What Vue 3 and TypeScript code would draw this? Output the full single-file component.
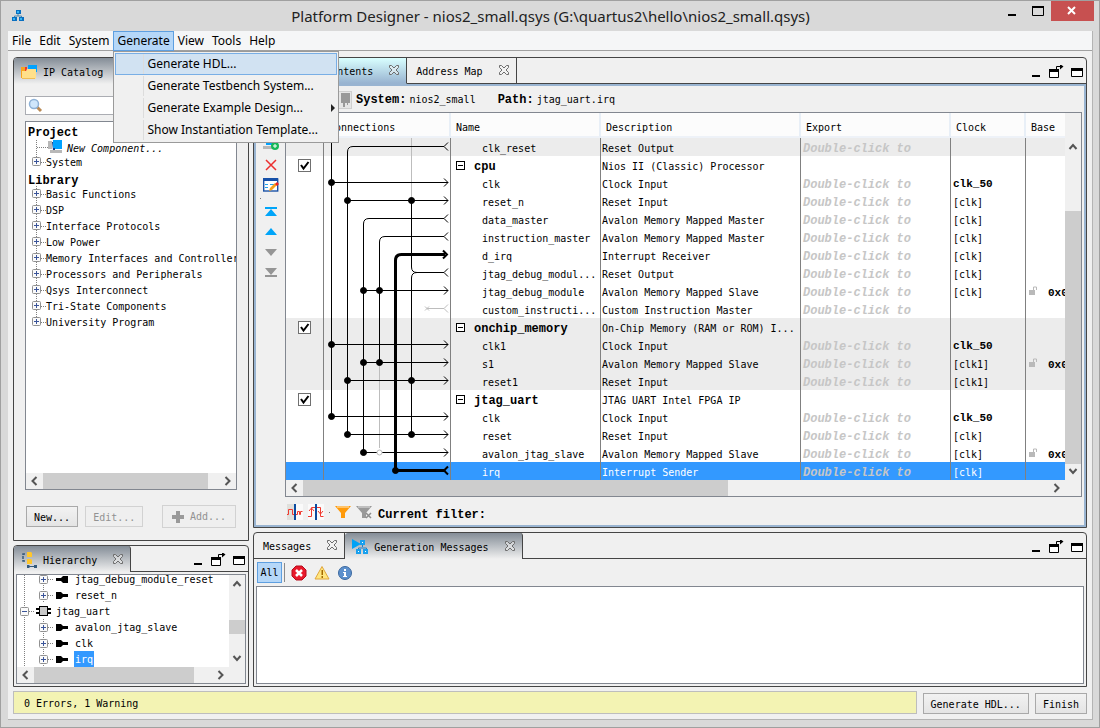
<script setup lang="ts">
interface Row {
  name: string
  desc: string
  kind?: 'module'
  clock?: string
  base?: string
  shade?: boolean
  selected?: boolean
}

const menus: string[] = ['File', 'Edit', 'System', 'Generate', 'View', 'Tools', 'Help']
const generateItems: string[] = [
  'Generate HDL...',
  'Generate Testbench System...',
  'Generate Example Design...',
  'Show Instantiation Template...',
]
const library: string[] = [
  'Basic Functions',
  'DSP',
  'Interface Protocols',
  'Low Power',
  'Memory Interfaces and Controllers',
  'Processors and Peripherals',
  'Qsys Interconnect',
  'Tri-State Components',
  'University Program',
]
const hierarchy: string[] = ['jtag_debug_module_reset', 'reset_n', 'jtag_uart', 'avalon_jtag_slave', 'clk', 'irq']

const rows: Row[] = [
  { name: 'clk_reset', desc: 'Reset Output', shade: true },
  { name: 'cpu', desc: 'Nios II (Classic) Processor', kind: 'module' },
  { name: 'clk', desc: 'Clock Input', clock: 'clk_50' },
  { name: 'reset_n', desc: 'Reset Input', clock: '[clk]' },
  { name: 'data_master', desc: 'Avalon Memory Mapped Master', clock: '[clk]' },
  { name: 'instruction_master', desc: 'Avalon Memory Mapped Master', clock: '[clk]' },
  { name: 'd_irq', desc: 'Interrupt Receiver', clock: '[clk]' },
  { name: 'jtag_debug_modul...', desc: 'Reset Output', clock: '[clk]' },
  { name: 'jtag_debug_module', desc: 'Avalon Memory Mapped Slave', clock: '[clk]', base: '0x0' },
  { name: 'custom_instructi...', desc: 'Custom Instruction Master' },
  { name: 'onchip_memory', desc: 'On-Chip Memory (RAM or ROM) I...', kind: 'module', shade: true },
  { name: 'clk1', desc: 'Clock Input', clock: 'clk_50', shade: true },
  { name: 's1', desc: 'Avalon Memory Mapped Slave', clock: '[clk1]', base: '0x0', shade: true },
  { name: 'reset1', desc: 'Reset Input', clock: '[clk1]', shade: true },
  { name: 'jtag_uart', desc: 'JTAG UART Intel FPGA IP', kind: 'module' },
  { name: 'clk', desc: 'Clock Input', clock: 'clk_50' },
  { name: 'reset', desc: 'Reset Input', clock: '[clk]' },
  { name: 'avalon_jtag_slave', desc: 'Avalon Memory Mapped Slave', clock: '[clk]', base: '0x0' },
  { name: 'irq', desc: 'Interrupt Sender', clock: '[clk]', selected: true },
]

const rowY = (i: number): number => i * 18 + 8.5

/* wires that end in an arrow head: [row, start x] */
const wires: [number, number][] = [
  [2, 7], [3, 23], [8, 39], [11, 7], [12, 39], [13, 23], [15, 7], [16, 23], [17, 39],
]
/* solid junctions: [row, x] */
const dots: [number, number][] = [
  [2, 7], [11, 7], [15, 7],
  [3, 23], [13, 23], [16, 23],
  [8, 39], [12, 39], [17, 39],
  [8, 55], [12, 55],
  [18, 71],
  [3, 87], [13, 87], [16, 87],
]
const forks: number[] = [0, 4, 5, 7]
</script>

<template>
  <svg class="defs" aria-hidden="true">
    <symbol id="i-close" viewBox="0 0 12 12">
      <path d="M1.500 1.500h2l2.500 2.500 2.500-2.500h2v2l-2.500 2.500 2.500 2.500v2h-2l-2.500-2.500-2.500 2.500h-2v-2l2.500-2.500-2.500-2.500z" fill="#f4f4f4" fill-opacity=".5" stroke="#6d6d6d" />
    </symbol>
    <symbol id="i-min" viewBox="0 0 10 14"><path d="M1 10h8v2h-8z" /></symbol>
    <symbol id="i-float" viewBox="0 0 16 14">
      <path d="M1.500 4v8.500h9v-6.500" fill="#fff" stroke="#000" /><path d="M1 4h10v3h-10z" />
      <path d="M8.500 4v-2.500h4" fill="none" stroke="#000" /><path d="M12 -1l3.500 2.500-3.500 3z" />
    </symbol>
    <symbol id="i-max" viewBox="0 0 12 14"><path d="M.5 3.500h11v8h-11z" fill="#fff" stroke="#000" /><path d="M0 3h12v3h-12z" /></symbol>
    <symbol id="i-left" viewBox="0 0 17 16"><path d="M10.500 4l-4 4 4 4" fill="none" stroke="#555" stroke-width="2" /></symbol>
    <symbol id="i-right" viewBox="0 0 17 16"><path d="M6.500 4l4 4-4 4" fill="none" stroke="#555" stroke-width="2" /></symbol>
    <symbol id="i-up" viewBox="0 0 16 17"><path d="M4.500 11l3.500-4 3.500 4" fill="none" stroke="#555" stroke-width="2" /></symbol>
    <symbol id="i-down" viewBox="0 0 16 17"><path d="M4.500 6l3.500 4 3.500-4" fill="none" stroke="#555" stroke-width="2" /></symbol>
    <symbol id="i-plus" viewBox="0 0 9 9">
      <rect x=".5" y=".5" width="8" height="8" rx="1" fill="#fafafa" stroke="#919191" /><path d="M2 4.500h5M4.500 2v5" stroke="#3a5499" />
    </symbol>
    <symbol id="i-minus" viewBox="0 0 9 9">
      <rect x=".5" y=".5" width="8" height="8" rx="1" fill="#fafafa" stroke="#919191" /><path d="M2 4.500h5" stroke="#3a5499" />
    </symbol>
    <symbol id="i-port" viewBox="0 0 12 8"><path d="M0 0h5l2 2h5v3h-5l-2 2h-5z" /></symbol>
    <symbol id="i-port-out" viewBox="0 0 12 8"><path d="M12 0h-5l-2 2h-5v3h5l2 2h5z" /></symbol>
  </svg>

  <div class="window">
    <header class="titlebar">
      <svg class="app-icon" width="12" height="12" viewBox="0 0 12 12">
        <path d="M6 4v2M2.500 8v-2h7v2" fill="none" stroke="#4b87ae" />
        <path d="M4 0h5v4h-5zM0 7h5v4h-5zM7 7h5v4h-5z" fill="#0a6fc0" /><path d="M5 1h2v2h-2zM1 8h2v2h-2zM8 8h2v2h-2z" fill="#35b5f4" />
      </svg>
      <h1>Platform Designer - nios2_small.qsys (G:\quartus2\hello\nios2_small.qsys)</h1>
      <div class="win-buttons">
        <button aria-label="Minimize"><svg width="10" height="12"><path d="M1 9h8v2h-8z" /></svg></button>
        <button aria-label="Maximize"><svg width="12" height="12"><path d="M.5 2h11v8.500h-11z" fill="none" stroke="#000" /><path d="M0 1h12v2h-12z" /></svg></button>
        <button class="close" aria-label="Close"><svg width="10" height="10"><path d="M1 1l7 7M8 1l-7 7" stroke="#fff" stroke-width="2" /></svg></button>
      </div>
    </header>

    <div class="client">
      <nav class="menubar">
        <div v-for="m in menus" :key="m" class="menu">
          <button :class="{ open: m === 'Generate' }">{{ m }}</button>
          <div v-if="m === 'Generate'" class="dropdown">
            <button v-for="(g, i) in generateItems" :key="g" :class="{ hot: i === 0 }">
              <span>{{ g }}</span>
              <svg v-if="i === 2" width="5" height="8"><path d="M0 0l4 4-4 4z" fill="#222" /></svg>
            </button>
          </div>
        </div>
      </nav>

      <main class="work">
        <div class="left">
          <section class="panel catalog">
            <div class="tabs">
              <div class="tab gray cat-tab">
                <svg width="17" height="17" viewBox="0 0 17 17">
                  <path d="M0 3h5l1 2v9h-6z" fill="#f7a41d" /><path d="M4 3h2v4h-2z" fill="#e33" /><path d="M7 1h9v7h-9z" fill="#00a2ff" /><path d="M1 7h4l1-2h9v9l-1 1h-13z" fill="#ffe08a" /><path d="M1 14h13v1h-13z" fill="#f0bd55" />
                </svg>
                <span>IP Catalog</span>
              </div>
            </div>
            <div class="cat-body">
              <label class="search">
                <svg width="16" height="16" viewBox="0 0 16 16"><path d="M9 9l4 4" stroke="#b98a55" stroke-width="3" /><circle cx="6" cy="6" r="4.500" fill="#cfe6fb" stroke="#8eb1d6" stroke-width="1.500" /></svg>
                <input type="text" aria-label="Search IP" />
              </label>
              <div class="treebox">
                <div class="tree">
                  <div class="group first">Project</div>
                  <div class="leaf new">
                    <svg width="41" height="14" viewBox="0 0 41 14">
                      <path d="M10.500 0v14M11 7.500h11" stroke="#808080" stroke-dasharray="1 1" fill="none" />
                      <path d="M22 1h4v8h-4zM24 10h12v3h-12z" fill="#b8b8b8" /><path d="M27 -1h9v10h-9z" fill="#00a2ff" /><path d="M26 2h1v6h2v2h-2z" fill="#123a8c" />
                    </svg>
                    <span>New Component...</span>
                  </div>
                  <div class="leaf">
                    <svg width="20" height="16"><path d="M10.500 0v8M15 8.500h5" stroke="#808080" stroke-dasharray="1 1" /><use href="#i-plus" x="6" y="3" width="9" height="9" /></svg>
                    <span>System</span>
                  </div>
                  <div class="group">Library</div>
                  <div v-for="(l, i) in library" :key="l" class="leaf">
                    <svg width="20" height="16"><path :d="i === library.length - 1 ? 'M10.5 0v8M15 8.5h5' : 'M10.5 0v16M15 8.5h5'" stroke="#808080" stroke-dasharray="1 1" /><use href="#i-plus" x="6" y="3" width="9" height="9" /></svg>
                    <span>{{ l }}</span>
                  </div>
                </div>
                <div class="hbar">
                  <svg width="17" height="16"><use href="#i-left" /></svg>
                  <div class="track"><div class="thumb cat-thumb"></div></div>
                  <svg width="17" height="16"><use href="#i-right" /></svg>
                </div>
              </div>
              <div class="cat-buttons">
                <button class="btn new-btn">New...</button>
                <button class="btn off" disabled>Edit...</button>
                <button class="btn off add" disabled><svg width="12" height="12"><path d="M4 0h4v4h4v4h-4v4h-4v-4h-4v-4h4z" fill="#9a9a9a" /></svg>Add...</button>
              </div>
            </div>
          </section>

          <section class="panel hierarchy">
            <div class="tabs">
              <div class="tab gray hier-tab">
                <svg width="17" height="17" viewBox="0 0 17 17">
                  <path d="M4 2h-2v7h2" fill="none" stroke="#345a7c" stroke-width="1.500" stroke-dasharray="3 1" /><path d="M6 0h4l1 1v4h-5zM6 7h4l1 1v4h-5z" fill="#ffc62b" /><path d="M6 13h2l1 1h4v-1h3v3h-3v-1h-4l-1 1h-2z" fill="#345a7c" />
                </svg>
                <span>Hierarchy</span>
                <svg class="x" width="12" height="12"><use href="#i-close" /></svg>
              </div>
              <div class="rest">
                <button aria-label="Minimize panel"><svg width="10" height="14"><use href="#i-min" /></svg></button>
                <button aria-label="Float panel"><svg width="16" height="14" class="spill"><use href="#i-float" /></svg></button>
                <button aria-label="Maximize panel"><svg width="12" height="14"><use href="#i-max" /></svg></button>
              </div>
            </div>
            <div class="hier-box">
              <div class="hier-row">
                <div class="hier-tree">
                  <div v-for="(h, i) in hierarchy" :key="h" class="leaf">
                    <svg v-if="i === 2" width="38" height="16">
                      <path d="M7.500 0v16M12 8.500h6" stroke="#808080" stroke-dasharray="1 1" /><use href="#i-minus" x="3" y="4" width="9" height="9" />
                      <path d="M19 5h4v2h-4zM19 9h4v2h-4zM30 5h4v2h-4zM30 9h4v2h-4z" /><rect x="22.500" y="3.500" width="8" height="9" fill="#c9c9c9" stroke="#000" />
                    </svg>
                    <svg v-else width="57" height="16">
                      <path d="M7.500 0v16M26.500 0v16M31 8.500h5" stroke="#808080" stroke-dasharray="1 1" /><use href="#i-plus" x="22" y="4" width="9" height="9" />
                      <use :href="i === 0 ? '#i-port-out' : '#i-port'" x="39" y="5" width="12" height="8" />
                    </svg>
                    <span :class="{ sel: h === 'irq' }">{{ h }}</span>
                  </div>
                </div>
                <div class="vbar">
                  <svg width="16" height="17"><use href="#i-up" /></svg>
                  <div class="track"><div class="thumb hier-vthumb"></div></div>
                  <svg width="16" height="17"><use href="#i-down" /></svg>
                </div>
              </div>
              <div class="hbar hier-h">
                <svg width="17" height="16"><use href="#i-left" /></svg>
                <div class="track"><div class="thumb hier-thumb"></div></div>
                <svg width="17" height="16"><use href="#i-right" /></svg>
              </div>
            </div>
          </section>
        </div>

        <div class="right">
          <section class="panel contents">
            <div class="tabs">
              <div class="tab blue sys-tab">
                <span>System Contents</span>
                <svg class="x" width="12" height="12"><use href="#i-close" /></svg>
              </div>
              <div class="tab">
                <span>Address Map</span>
                <svg class="x" width="12" height="12"><use href="#i-close" /></svg>
              </div>
              <div class="rest">
                <button aria-label="Minimize panel"><svg width="10" height="14"><use href="#i-min" /></svg></button>
                <button aria-label="Float panel"><svg width="16" height="14" class="spill"><use href="#i-float" /></svg></button>
                <button aria-label="Maximize panel"><svg width="12" height="14"><use href="#i-max" /></svg></button>
              </div>
            </div>
            <div class="sys-body">
              <div class="path">
                <svg width="17" height="18" viewBox="0 0 17 18"><rect x=".5" y=".5" width="16" height="17" fill="#e6e6e6" stroke="#cfcfcf" /><path d="M6 2h9v10h-2v2h-1v-2h-2v4h-2v-4h-2z" fill="#999" /></svg>
                <p><b>System:</b><span>nios2_small</span></p>
                <p><b>Path:</b><span>jtag_uart.irq</span></p>
              </div>
              <div class="sys-row">
                <div class="vtools">
                  <button aria-label="Add"><svg width="16" height="16"><path d="M0 9h10v3h-10z" fill="#b8b8b8" /><path d="M3 2h9v6h-9z" fill="#00a2ff" /><circle cx="12" cy="9" r="4" fill="#18b858" /><path d="M10 9h4M12 7v4" stroke="#fff" /></svg></button>
                  <button aria-label="Remove"><svg width="16" height="16"><path d="M3 3l10 10M13 3l-10 10" stroke="#ec2f2f" stroke-width="1.500" /></svg></button>
                  <button aria-label="Edit"><svg width="16" height="16"><rect x=".7" y="2" width="14" height="12" fill="#fff" stroke="#1a52a6" stroke-width="1.400" /><path d="M0 1h15v3h-15z" fill="#1650a8" /><path d="M2 7.500h3M2 10.500h3M7 7.500h4" stroke="#21a3ec" /><path d="M6 14l1-3 5-5 2 2-5 5z" fill="#f5a11c" /><path d="M12 7l2-2 2 2-2 2z" fill="#e22" /></svg></button>
                  <i></i>
                  <button aria-label="Top"><svg width="16" height="16"><path d="M2 3h12v2h-12zM8 5l6 7h-12z" fill="#00a5f9" /></svg></button>
                  <button aria-label="Up"><svg width="16" height="16"><path d="M8 4l6 7h-12z" fill="#00a5f9" /></svg></button>
                  <button aria-label="Down"><svg width="16" height="16"><path d="M8 12l6-7h-12z" fill="#959595" /></svg></button>
                  <button aria-label="Bottom"><svg width="16" height="16"><path d="M2 11h12v2h-12zM8 11l6-7h-12z" fill="#959595" /></svg></button>
                </div>
                <div class="gridbox">
                  <div class="grid-main">
                    <div class="grid-view">
                      <table>
                        <colgroup><col class="c-use" /><col class="c-con" /><col class="c-name" /><col class="c-desc" /><col class="c-exp" /><col class="c-clk" /><col /></colgroup>
                        <thead>
                          <tr><th></th><th>Connections</th><th>Name</th><th>Description</th><th>Export</th><th>Clock</th><th>Base</th></tr>
                        </thead>
                        <tbody>
                          <tr v-for="(r, i) in rows" :key="i" :class="{ shade: r.shade, selected: r.selected }">
                            <td class="use">
                              <label v-if="r.kind === 'module'" class="tick">
                                <input type="checkbox" checked :aria-label="'Use ' + r.name" />
                                <svg width="13" height="13"><path d="M3 6l2.500 3.500 5-6.500" fill="none" stroke="#000" stroke-width="2" /></svg>
                              </label>
                            </td>
                            <td class="con">
                              <svg v-if="i === 0" class="wires" width="126" height="342" viewBox="0 0 126 342" fill="none" stroke="#000">
                                <path d="M87.500 0v62M55.500 224v86" stroke="#bdbdbd" />
                                <path d="M7.500 0v278.500M120 8.500h-91q-5.500 0 -5.500 5.500v282.500M120 80.500h-75q-5.500 0 -5.500 5.500v228.500M120 98.500h-59q-5.500 0 -5.500 5.500v120.500" />
                                <path d="M87.500 62v67q0 5.500 5.500 5.500h27M93 134.500q-5.500 0 -5.500 5.500v156.500" />
                                <path v-for="w in wires" :key="'w' + w[0]" :d="`M${w[1]} ${rowY(w[0])}H124m-4 -4l4 4l-4 4`" />
                                <path v-for="f in forks" :key="'f' + f" :d="`M124 ${rowY(f) - 4}l-4 4l4 4`" />
                                <path d="M103 170.500h17M124 166.500l-4 4l4 4M101 168.500l4 4M105 168.500l-4 4" stroke="#bdbdbd" />
                                <path d="M71.500 332.500v-210q0 -6 6 -6h44M71.500 332.500h50" stroke-width="3" />
                                <path d="M119 112.500l4 4l-4 4M124 328.500l-4 4l4 4" stroke-width="2" />
                                <circle v-for="(d, k) in dots" :key="'d' + k" :cx="d[1] + 0.5" :cy="rowY(d[0])" r="3" fill="#000" stroke="#000" />
                                <circle cx="55.500" cy="314.500" r="2.500" fill="#fff" stroke="#bdbdbd" />
                              </svg>
                            </td>
                            <td v-if="r.kind === 'module'" class="mod">
                              <svg width="10" height="10"><rect x=".5" y=".5" width="8" height="8" fill="#fff" stroke="#000" /><path d="M2 4.500h5" stroke="#000" /></svg><b>{{ r.name }}</b>
                            </td>
                            <td v-else class="sub">{{ r.name }}</td>
                            <td class="desc">{{ r.desc }}</td>
                            <td class="exp">{{ r.kind === 'module' ? '' : 'Double-click to' }}</td>
                            <td class="clk" :class="{ strong: r.clock === 'clk_50' }">{{ r.clock }}</td>
                            <td class="base"><template v-if="r.base"><svg width="10" height="10"><path d="M0 4h6v5h-6z" fill="#b9b9b9" /><path d="M4.500 4v-3h3v3" fill="none" stroke="#b9b9b9" /></svg><b>{{ r.base }}</b></template></td>
                          </tr>
                        </tbody>
                      </table>
                    </div>
                    <div class="vbar sys-v">
                      <svg width="16" height="17"><use href="#i-up" /></svg>
                      <div class="track"><div class="thumb sys-vthumb"></div></div>
                      <svg width="16" height="17"><use href="#i-down" /></svg>
                    </div>
                  </div>
                  <div class="hbar sys-h">
                    <svg width="17" height="16"><use href="#i-left" /></svg>
                    <div class="track"><div class="thumb sys-thumb"></div></div>
                    <svg width="17" height="16"><use href="#i-right" /></svg>
                  </div>
                </div>
              </div>
              <div class="filters">
                <svg width="16" height="16"><path d="M0 0h8v16h-8z" fill="#dfdfdb" /><path d="M8 0h8v16h-8z" fill="#fafafa" /><path d="M0 10.500h1.500v-5h4v5h5v-3h2v3h1v-3h2" fill="none" stroke="#ef3a30" /><path d="M7 0h2v16h-2z" fill="#0b4ba0" /></svg>
                <svg width="16" height="16"><path d="M0 0h16v16h-16z" fill="#fafafa" /><path d="M0 12.500h3.500v-9h9v9h3M1 7l2.500-3 2.500 3M10 7l2.500 3 2.500-3" fill="none" stroke="#ef3a30" /><path d="M7 0h2v16h-2z" fill="#0b4ba0" /></svg>
                <i></i>
                <svg width="16" height="16"><path d="M0 2h16l-6 7v5h-4v-5z" fill="#ff9a0a" /><path d="M2 3h12" stroke="#ffd08a" stroke-width="1.500" /></svg>
                <svg width="16" height="16"><path d="M0 2h16l-6 7v5h-4v-5z" fill="#999" /><path d="M2 3h12" stroke="#ccc" stroke-width="1.500" /><path d="M10 9l5 5M15 9l-5 5" stroke="#8d8d8d" stroke-width="1.500" /></svg>
                <b>Current filter:</b>
              </div>
            </div>
          </section>

          <section class="panel messages">
            <div class="tabs">
              <div class="tab">
                <span>Messages</span>
                <svg class="x" width="12" height="12"><use href="#i-close" /></svg>
              </div>
              <div class="tab gray gen-tab">
                <svg width="17" height="17"><path d="M0 0l9 5-9 5z" fill="#00a2f5" /><path d="M10.500 5v3M6.500 12v-3h8v3" fill="none" stroke="#1a7fc8" /><path d="M8 1h5v5h-5zM4 10h5v5h-5zM11 10h5v5h-5z" fill="#18a0ee" /><path d="M10 3h1v1h-1zM6 12h1v1h-1zM13 12h1v1h-1z" fill="#fff" /></svg>
                <span>Generation Messages</span>
                <svg class="x" width="12" height="12"><use href="#i-close" /></svg>
              </div>
              <div class="rest">
                <button aria-label="Minimize panel"><svg width="10" height="14"><use href="#i-min" /></svg></button>
                <button aria-label="Float panel"><svg width="16" height="14" class="spill"><use href="#i-float" /></svg></button>
                <button aria-label="Maximize panel"><svg width="12" height="14"><use href="#i-max" /></svg></button>
              </div>
            </div>
            <div class="msg-tools">
              <button class="all">All</button>
              <i></i>
              <button aria-label="Errors"><svg width="16" height="16"><path d="M5 1h6l4 4v6l-4 4h-6l-4-4v-6z" fill="#e8192b" stroke="#b50d1c" /><path d="M5 5l6 6M11 5l-6 6" stroke="#fff" stroke-width="2.500" /></svg></button>
              <button aria-label="Warnings"><svg width="16" height="16"><path d="M8 1.500l7 12.500h-14z" fill="#ffe680" stroke="#e0a63a" stroke-linejoin="round" /><path d="M7.500 5h1.500v5h-1.500zM7.500 11h1.500v2h-1.500z" fill="#a36a00" /></svg></button>
              <button aria-label="Info"><svg width="16" height="16"><circle cx="8" cy="8" r="6.500" fill="#5d90cc" stroke="#3b689f" /><path d="M7 4h2v2h-2zM6 7h3v4h1v1h-4v-1h1v-3h-1z" fill="#fff" /></svg></button>
            </div>
            <div class="msg-box"></div>
          </section>
        </div>
      </main>

      <footer class="status">
        <div class="note">0 Errors, 1 Warning</div>
        <button class="btn">Generate HDL...</button>
        <button class="btn">Finish</button>
      </footer>
    </div>
  </div>
</template>

<style>
html, body { margin: 0; background: #d9d9d9; }
</style>

<style scoped>
* { box-sizing: border-box; }
.defs { position: absolute; width: 0; height: 0; }
svg { display: block; flex: none; }
.spill { overflow: visible; }
p { margin: 0; }
button { font: inherit; color: inherit; border: 0; background: none; padding: 0; margin: 0; white-space: nowrap; }
.window {
  min-height: 100vh; display: flex; flex-direction: column; padding: 0 6px 7px 7px; overflow: hidden;
  background: #d9d9d9; border: 1px solid #a0a0a0; color: #000;
  font: 10px/16px "DejaVu Sans Mono", "Liberation Mono", monospace;
}
b, .group { font: bold 12px/16px "Liberation Mono", monospace; }

.titlebar { display: grid; grid-template-columns: 94px 1fr 94px; height: 30px; align-items: center; }
.app-icon { margin-left: 4px; }
h1 { margin: 0; display: flex; justify-content: center; font: 15px/28px "Noto Sans", "Open Sans", sans-serif; color: #222; white-space: nowrap; }
.win-buttons { display: flex; justify-content: flex-end; align-self: start; align-items: center; margin-right: -1px; }
.win-buttons button { width: 27px; height: 20px; display: grid; place-items: center; }
.win-buttons .close { width: 45px; background: #c75050; }

.client { flex: 1; display: flex; flex-direction: column; border: 1px solid #b4b4b4; border-width: 0 1px 1px 0; background: #f0f0f0; }
.menubar { display: flex; height: 20px; background: #f5f6f7; border-bottom: 1px solid #a0a0a0; font: 12px/18px "Noto Sans", "Open Sans", sans-serif; }
.menu { position: relative; }
.menu > button { height: 20px; padding: 0 3px; border: 1px solid transparent; }
.menu > button.open { background: #b5d7f8; border-color: #5e9fe0; }
.dropdown { position: absolute; z-index: 5; top: 20px; left: 0; width: 226px; padding: 1px; border: 1px solid #9a9a9a; background: #f0f0f0; }
.dropdown button { display: flex; align-items: center; justify-content: space-between; width: 100%; height: 22px; padding: 0 0 0 27px; border: 1px solid transparent; text-align: left; }
.dropdown button span { padding-left: 3px; line-height: 20px; border-left: 1px solid #dcdcdc; }
.dropdown button.hot { background: #d1e2f2; border-color: #78aee5; }

.work { flex: 1; display: flex; gap: 4px; padding: 6px 5px 4px; }
.left { width: 236px; flex: none; display: flex; flex-direction: column; gap: 4px; }
.right { flex: 1; min-width: 0; display: flex; flex-direction: column; gap: 4px; }
.panel { border: 1px solid #454545; border-radius: 4px 4px 0 0; background: #f0f0f0; display: flex; flex-direction: column; }

.tabs { display: flex; height: 26px; }
.tab { display: flex; align-items: center; height: 26px; padding: 3px 6px 0 9px; gap: 15px; border-right: 1px solid #454545; border-bottom: 1px solid #454545; white-space: nowrap; }
.tab .x { margin: 0 0 4px; }
.tab.gray { border-bottom: 0; border-radius: 3px 3px 0 0; background: linear-gradient(#848d97, #f0f0f0); }
.tab.blue { border-bottom-color: #99b4d1; border-radius: 3px 0 0 0; background: linear-gradient(#d9ffff, #99b4d1); }
.rest { flex: 1; display: flex; justify-content: flex-end; align-items: center; gap: 7px; padding: 2px 3px 0 0; border-bottom: 1px solid #454545; }
.tab.cat-tab, .tab.hier-tab, .tab.gen-tab { padding-left: 7px; }
.tab.cat-tab { width: 150px; gap: 5px; }
.tab.hier-tab { gap: 5px; }
.tab.gen-tab { gap: 5px; }
.hier-tab .x, .gen-tab .x { margin-left: 10px; }
.tab.sys-tab { padding-left: 29px; }

.catalog { flex: 1; }
.cat-body { flex: 1; display: flex; flex-direction: column; padding: 12px 11px 12px; }
.search { display: flex; align-items: center; height: 19px; margin-bottom: 6px; padding-left: 2px; background: #fff; border: 1px solid #abadb3; }
.search input { flex: 1; min-width: 0; border: 0; outline: 0; background: none; }
.treebox { flex: 1; display: flex; flex-direction: column; border: 1px solid #828790; background: #fff; }
.tree { flex: 1; overflow: hidden; }
.leaf { display: flex; height: 16px; line-height: 18px; white-space: nowrap; }
.group { height: 16px; line-height: 22px; padding-left: 2px; }
.group.first { height: 18px; }
.new { height: 14px; font-style: italic; }
.hbar, .vbar { display: flex; background: #f0f0f0; }
.hbar { height: 16px; }
.vbar { width: 16px; flex: none; flex-direction: column; }
.track { flex: 1; min-height: 0; }
.thumb { background: #cdcdcd; }
.hbar .thumb { height: 100%; }
.cat-thumb { width: 94%; }
.cat-buttons { display: flex; align-items: center; margin-top: 15px; gap: 7px; }
.btn { height: 21px; padding: 0 7px; border: 1px solid #a9a9a9; background: linear-gradient(#f2f2f2, #e4e4e4); line-height: 21px; }
.btn.off { color: #929292; border-color: #d2d2d2; background: #efefef; }
.new-btn { margin-left: 1px; }
.add { display: flex; align-items: center; gap: 6px; height: 23px; margin: 0 1px 0 auto; padding: 0 9px; }

.hier-box { margin: 2px; border: 1px solid #828790; background: #f0f0f0; }
.hier-row { display: flex; height: 92px; overflow: hidden; }
.hier-tree { flex: 1; background: #fff; margin-top: -4px; }
.hier-tree .leaf span { padding: 0 1px; }
.hier-tree .sel { background: #3399ff; color: #fff; }
.hier-vthumb { height: 14px; margin-top: 28px; }
.hier-h { margin-right: 16px; }
.hier-thumb { width: 90%; }

.sys-body { flex: 1; display: flex; flex-direction: column; border: 2px solid #99b4d1; }
.path { display: flex; align-items: center; height: 26px; padding: 2px 0 0 79px; white-space: nowrap; }
.path svg { margin-right: 4px; }
.path p { display: flex; gap: 3px; margin-right: 22px; }
.sys-row { flex: 1; display: flex; margin-right: 2px; }
.vtools { width: 29px; flex: none; display: flex; flex-direction: column; align-items: center; gap: 4px; padding-top: 25px; }
.vtools i, .filters i { width: 1px; height: 1px; background: #777; }
.vtools i { align-self: flex-start; margin: 1px 0 1px 4px; }
.gridbox { flex: 1; min-width: 0; display: flex; flex-direction: column; border: 1px solid #828790; }
.grid-main { flex: 1; display: flex; }
.grid-view { flex: 1; min-width: 0; overflow: hidden; background: #fff; }
table { width: 100%; table-layout: fixed; border-collapse: separate; border-spacing: 0; }
.c-use { width: 38px; } .c-con { width: 127px; } .c-name { width: 150px; } .c-desc { width: 200px; } .c-exp { width: 150px; } .c-clk { width: 75px; }
th { height: 25px; padding: 6px 0 0 5px; text-align: left; font-weight: normal; background: #fcfcfc; border-right: 2px solid #e8eff7; border-bottom: 2px solid #eef2f8; }
td { height: 18px; padding: 3px 0 0 1px; line-height: 15px; white-space: nowrap; overflow: hidden; border-right: 1px solid #808080; }
td:last-child, th:last-child { border-right: 0; }
tr.shade { background: #ececec; }
tr.selected { background: #3399ff; color: #fff; }
td.use { padding: 0 0 0 12px; }
.tick { display: grid; width: 13px; height: 13px; }
.tick input, .tick svg { grid-area: 1 / 1; }
.tick input { appearance: none; width: 13px; height: 13px; margin: 0; border: 1px solid #707070; background: #fff; }
td.con { position: relative; overflow: visible; padding: 0; }
.wires { position: absolute; top: 0; left: 0; }
td.mod { padding-left: 5px; }
td.mod svg { display: inline-block; margin-right: 8px; vertical-align: -1px; }
td.mod b, td.base b { line-height: 14px; }
td.sub { padding-left: 31px; }
td.exp { padding: 4px 0 0 2px; font: italic bold 12px/14px "Liberation Mono", monospace; color: #c6c6c6; }
td.clk { padding-left: 2px; }
td.clk.strong { font-family: "Liberation Mono", monospace; font-size: 11px; font-weight: bold; }
td.base { padding: 2px 0 0 3px; }
td.base svg { display: inline-block; margin-right: 9px; }
td.base b { font-size: 11px; }
.sys-v { margin: 25px 0 0; }
.sys-vthumb { height: 82%; margin-top: 56px; }
.sys-h { margin-right: 16px; }
.sys-thumb { width: 57%; }
.filters { display: flex; align-items: center; gap: 5px; padding: 4px 0 2px 31px; height: 28px; white-space: nowrap; }
.filters b { padding: 6px 0 0 1px; }

.messages { height: 155px; flex: none; }
.msg-tools { display: flex; align-items: center; gap: 7px; height: 27px; padding: 1px 3px; }
.msg-tools .all { width: 25px; height: 21px; border: 1px solid #5e9fe0; background: #b5d7f8; }
.msg-tools i { width: 1px; height: 19px; margin: 0 -1px 0 -5px; background: #8a8a8a; }
.msg-box { flex: 1; margin: 0 2px 2px; border: 1px solid #828790; background: #fff; }

.status { display: flex; align-items: center; gap: 6px; padding: 0 5px 5px; }
.note { flex: 1; height: 23px; padding: 0 10px; line-height: 24px; border: 1px solid #bdbdbd; background: #f3f3b3; }
.status .btn { margin-top: 1px; }
</style>
